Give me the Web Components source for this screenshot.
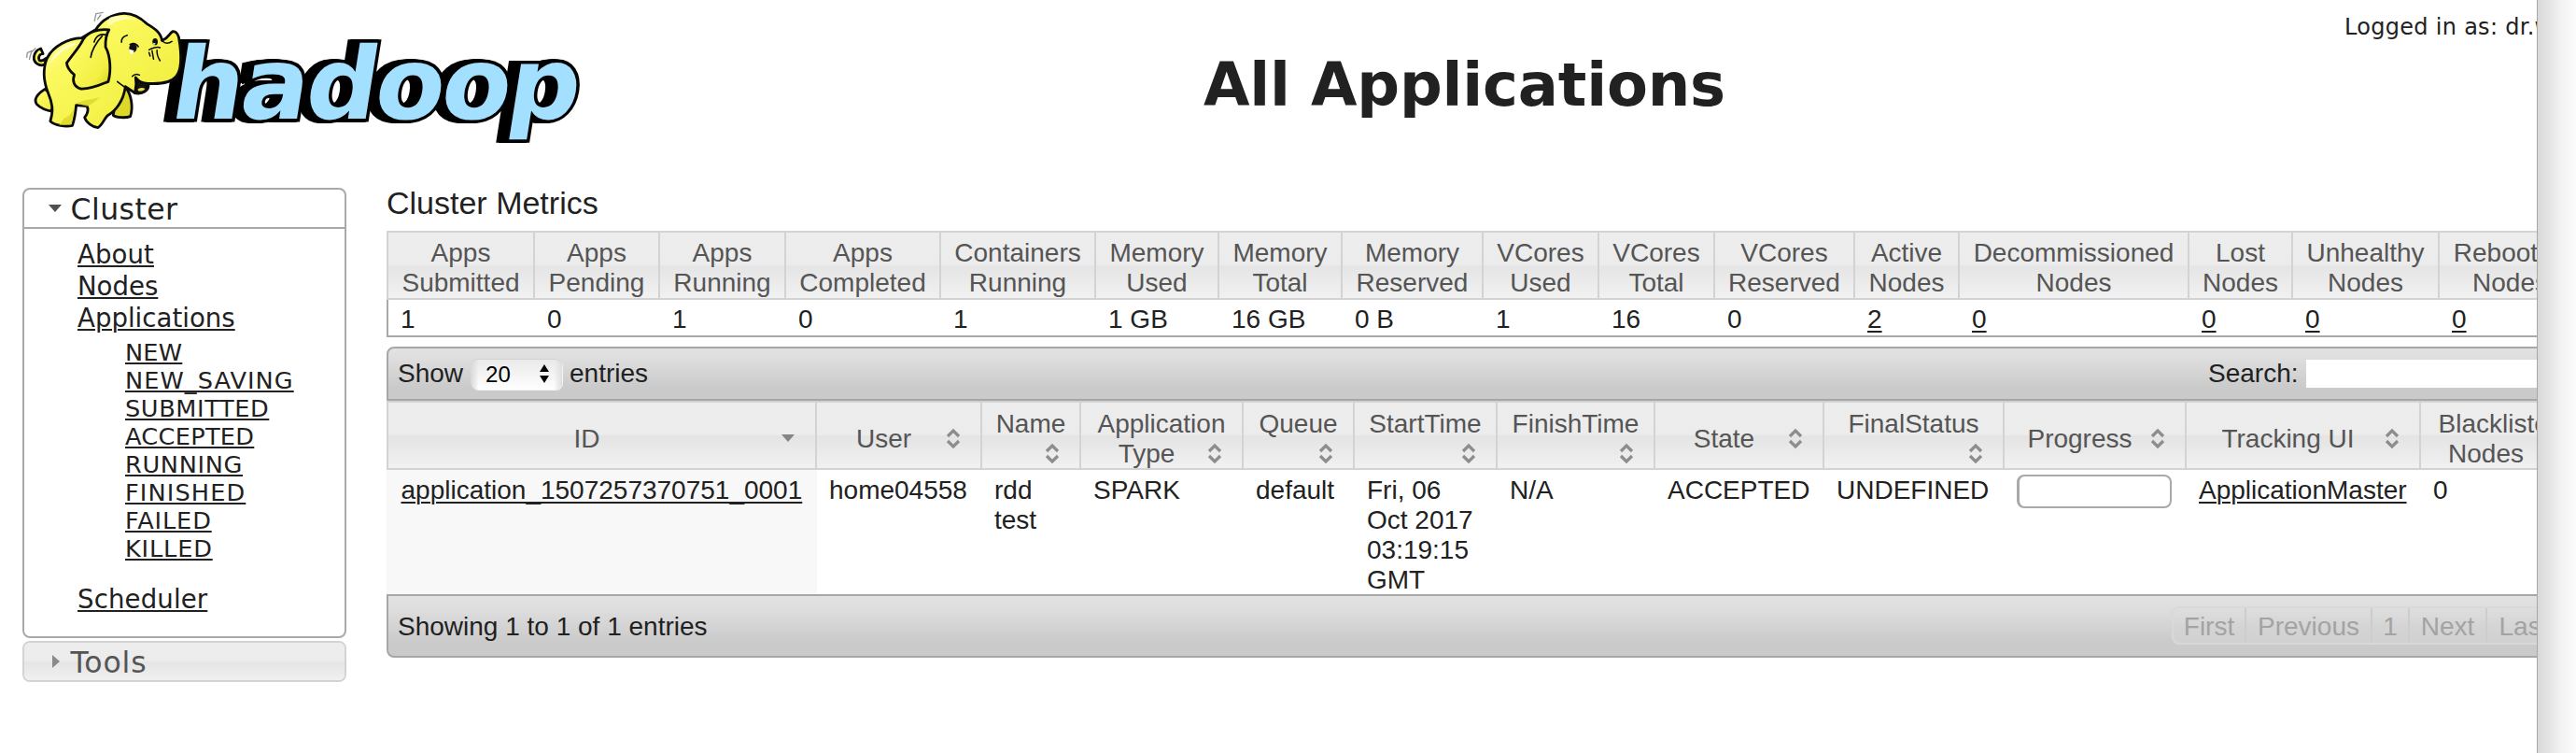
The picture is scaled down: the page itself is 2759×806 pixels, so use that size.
<!DOCTYPE html>
<html lang="en">
<head>
<meta charset="utf-8">
<title>All Applications</title>
<style>
html,body{margin:0;height:100%;background:#fff;overflow:hidden}
body{color:#212121;font:28px/32px "Liberation Sans",Arial,sans-serif}
</style>
</head>
<body>
<yarn-app></yarn-app>
<script>
const define = (name, html, setup) => customElements.define(name, class extends HTMLElement {
  connectedCallback() {
    if (this.shadowRoot) return;
    const root = this.attachShadow({mode: 'open'});
    root.innerHTML = typeof html === 'function' ? html(this) : html;
    if (setup) setup(this, root);
  }
});

/* Text tracked out or in to a given advance width. */
define('tracked-text', `<style>:host{display:inline-block;white-space:nowrap;text-decoration:inherit}</style><slot></slot>`, host => {
  const natural = host.getBoundingClientRect().width;
  host.style.letterSpacing = ((+host.getAttribute('width') - natural) / host.textContent.length).toFixed(3) + 'px';
});

define('hadoop-logo', `
<style>:host{display:block;width:640px;height:170px}svg{display:block;overflow:visible}
.e *{vector-effect:non-scaling-stroke;stroke-linejoin:round;stroke-linecap:round}
text{font:bold 107px "DejaVu Sans",sans-serif;letter-spacing:-3px;fill:#a3dfff;stroke:#000;stroke-width:7px;paint-order:stroke;stroke-linejoin:miter}
.w{filter:drop-shadow(-3px 0 0 #000) drop-shadow(-3px 0 0 #000) drop-shadow(-4px 0 0 #000)}</style>
<svg width="640" height="170" viewBox="0 0 640 170">
<defs><linearGradient id="y" x1="0" y1="0" x2="1" y2="1"><stop offset="0" stop-color="#ffffb0"/><stop offset=".3" stop-color="#fbf95e"/><stop offset=".75" stop-color="#f2f044"/><stop offset="1" stop-color="#d2ce20"/></linearGradient></defs>
<g class="w"><g transform="translate(180 127) skewX(-9)"><text textLength="434" lengthAdjust="spacingAndGlyphs">hadoop</text></g></g>
<g class="e" transform="scale(.40816 .33333)" stroke="#0b0b0b" stroke-width="2.8" fill="url(#y)">
<path d="M118 206C104 216 88 202 89 183C90 168 99 158 107 156L113 173C104 172 99 184 103 193C108 198 114 194 121 187Z"/>
<path d="M118 286C100 300 88 318 96 334C106 348 124 356 136 357L142 310Z"/>
<path d="M330 280C345 305 350 345 342 374C328 380 304 377 297 370L308 300Z" fill="#dcd82a"/>
<path d="M214 122C178 124 140 148 124 186C111 222 115 264 127 301C137 330 141 354 132 389C144 403 172 408 190 403C197 377 199 352 200 338L228 341C234 352 228 369 222 377C226 394 244 409 257 410C269 401 272 384 282 371C302 358 324 326 329 278C340 287 350 295 354 299C374 304 393 290 389 268C418 270 448 267 462 246C480 219 474 154 469 119C465 105 459 100 453 101C443 108 443 122 425 130C422 104 404 90 385 76C367 55 348 42 325 43C290 46 266 67 252 94Z"/>
<path d="M286 96C260 91 230 103 218 127C208 153 192 172 175 202C176 219 187 232 195 240C189 260 194 278 211 285C239 287 264 272 284 262C292 229 290 179 277 151C276 125 279 110 286 96Z"/>
<path d="M247 135C252 115 263 106 281 113M268 116C252 136 240 164 238 184" fill="none" stroke-width="1.6"/>
<path d="M356 249C359 269 357 281 355 292C371 297 387 285 388 268C371 267 362 259 356 249Z" fill="#141414"/>
<path d="M362 286C369 281 375 281 381 285C376 293 367 294 362 291Z" fill="#e8e33a" stroke="none"/>
<path d="M319 136C318 124 325 116 334 113M341 143C350 137 358 141 363 150M308 262C324 279 340 289 354 299M347 245C353 237 360 237 366 241M391 160C406 151 414 150 420 153M399 163L403 190M412 161C411 174 415 186 420 195M391 169L394 180M426 132C433 140 441 141 451 133" fill="none" stroke-width="1.5"/>
<ellipse cx="349" cy="154" rx="10" ry="14" fill="#111" stroke="none"/><path d="M340 158L352 163L347 174L341 170Z" fill="#fff" stroke="none"/>
<ellipse cx="407" cy="134" rx="7" ry="11" fill="#111" stroke="none"/><path d="M402 137L409 140L403 145Z" fill="#fff" stroke="none"/>
<path d="M287 57C310 45 342 52 361 66C338 59 306 60 280 88Z" fill="#ffffd2" opacity=".75" stroke="none"/>
<path d="M185 139C160 151 139 176 130 207C149 178 166 156 205 141Z" fill="#ffffdb" opacity=".8" stroke="none"/>
<path d="M200 332C220 319 244 320 263 312C248 327 241 335 228 341ZM169 379C184 373 190 360 194 344L188 400L155 402Z" fill="#d8d426" opacity=".75" stroke="none"/>
<path d="M248 67L252 44L270 40M256 62L264 48M70 184L72 169L84 163M77 190L82 168L93 155" fill="none" stroke="#999" stroke-width="1.4"/>
</g></svg>`);

define('nav-section', host => `
<style>
:host{display:block;box-sizing:border-box;width:347px;border:2px solid #a9a9a9;border-radius:8px;overflow:hidden;font-family:"DejaVu Sans",Verdana,sans-serif}
h3{box-sizing:border-box;height:40px;margin:0;padding:0 0 0 25px;display:flex;align-items:center;font-weight:400;font-size:31.5px;line-height:40px}
svg{width:16px;height:16px;margin-right:8.5px;flex:none}
tracked-text{padding-top:1px}
.body{border-top:2px solid #a9a9a9}
:host(:not([open])){border-color:#d3d3d3;color:#555}
:host(:not([open])) h3{line-height:40px;background:linear-gradient(#ededed 0,#ececec 48%,#e5e5e5 52%,#f0f0f0)}
:host(:not([open])) .body{display:none}
</style>
<h3><svg viewBox="0 0 16 16">${host.hasAttribute('open') ? '<path d="M1 4H15L8 12Z" fill="#505050"/>' : '<path d="M5 1L13 8L5 15Z" fill="#8a8a8a"/>'}</svg><tracked-text width="${host.getAttribute('label-width')}">${host.getAttribute('label')}</tracked-text></h3>
<div class="body"><slot></slot></div>`);

const link = ([t, w]) => `<li><a href="#"><tracked-text width="${w}">${t}</tracked-text></a></li>`;
define('side-nav', `
<style>
:host{display:flex;flex-direction:column;gap:3px;width:347px}
ul{list-style:none;margin:0;padding:0}
a{color:inherit;text-decoration:underline;text-decoration-thickness:2px;text-underline-offset:2px}
.top{padding:11px 0 0 57px;font-size:27.6px;line-height:34px;height:425px}
.top li{height:34px}
.sub{margin:4px 0 23px 51px;font-size:25.6px;line-height:30px}
.sub li{height:30px}
</style>
<nav-section open label="Cluster" label-width="115">
<ul class="top">${[['About',82],['Nodes',86.3],['Applications',168.7]].map(link).join('')}
<ul class="sub">${[['NEW',61.3],['NEW_SAVING',180.7],['SUBMITTED',154.3],['ACCEPTED',138.3],['RUNNING',126],['FINISHED',129.3],['FAILED',92.7],['KILLED',93.7]].map(link).join('')}</ul>
${link(['Scheduler',139.3])}</ul>
</nav-section>
<nav-section label="Tools" label-width="82"></nav-section>`);

define('metrics-table', () => {
  const heads = ['Apps Submitted','Apps Pending','Apps Running','Apps Completed','Containers Running','Memory Used','Memory Total','Memory Reserved','VCores Used','VCores Total','VCores Reserved','Active Nodes','Decommissioned Nodes','Lost Nodes','Unhealthy Nodes','Rebooted Nodes'];
  const vals = ['1','0','1','0','1','1 GB','16 GB','0 B','1','16','0'];
  const links = ['2','0','0','0','0'];
  return `<style>
:host{display:grid;width:2352px;box-sizing:border-box;border-left:2px solid #a9a9a9;border-bottom:2px solid #a9a9a9;
grid-template-columns:157px 134px 135px 166px 166px 132px 132px 151px 124px 124px 150px 112px 246px 111px 157px 153px;grid-template-rows:74px 38px}
.h{box-sizing:border-box;border:solid #d3d3d3;border-width:2px 2px 2px 0;padding-top:6px;text-align:center;color:#555;background:linear-gradient(#ededed 0,#ececec 48%,#e5e5e5 52%,#f1f1f1)}
.h:nth-of-type(1){box-shadow:-2px 0 #d3d3d3}
.v{padding:5px 0 0 13px}
a{color:inherit;text-decoration:underline;text-decoration-thickness:2px;text-underline-offset:3px}
</style>${heads.map(h => `<div class="h">${h.replace(' ', '<br>')}</div>`).join('')}${vals.map(v => `<div class="v">${v}</div>`).join('')}${links.map(v => `<div class="v"><a href="#">${v}</a></div>`).join('')}`;
});

define('tool-bar', `
<style>
:host{display:flex;box-sizing:border-box;width:2352px;border:2px solid #a7a7a7;padding-left:10px;background:linear-gradient(#e2e2e2 0,#dedede 20%,#cbcbcb 75%,#cacaca)}
:host([top]){height:58px;border-radius:8px 8px 0 0}
:host([bottom]){height:68px;border-radius:0 0 8px 8px}
</style><slot></slot>`);

define('length-select', `
<style>
:host{display:flex;align-items:center;justify-content:space-between;box-sizing:border-box;width:98px;height:33px;padding:0 13px 0 16px;border-radius:8px;font-size:24px;line-height:33px;color:#000;
background:linear-gradient(90deg,#d8d8d8 0,#fff0 9%,#fff0 91%,#dedede),linear-gradient(#e9e9e9,#fff);box-shadow:inset 0 1px #d2d2d2,1px 1px #f4f4f4}
svg{width:12px;height:22px;margin-top:-2px}
</style><slot></slot><svg viewBox="0 0 12 22"><path d="M1 9L6 1L11 9ZM1 13L6 21L11 13Z"/></svg>`);

define('sort-icon', host => `
<style>:host{display:block;float:right;width:32px;height:32px}svg{display:block;width:32px;height:32px}</style>
<svg viewBox="0 0 32 32" fill="none" stroke="#8d8d8d" stroke-width="3.2">${host.hasAttribute('down') ? '<path d="M9 11H23L16 19Z" fill="#858585" stroke="none"/>' : '<path d="M10 13L16 7L22 13M10 18L16 24L22 18"/>'}</svg>`);

define('progress-bar', `<style>:host{display:block;box-sizing:border-box;width:166px;height:36px;border:2px solid #a9a9a9;border-left-width:3px;border-radius:8px;background:#fff}</style>`);

define('apps-table', () => {
  const s = '<sort-icon></sort-icon>';
  const heads = ['<sort-icon down></sort-icon>ID', s + 'User', 'Name<br>' + s + '&nbsp;', `Application<br>${s}Type`, 'Queue<br>' + s + '&nbsp;', 'StartTime<br>' + s + '&nbsp;', 'FinishTime<br>' + s + '&nbsp;', s + 'State', 'FinalStatus<br>' + s + '&nbsp;', s + 'Progress', s + 'Tracking UI', `Blacklisted<br>${s}Nodes`];
  const cells = ['<a href="#">application_1507257370751_0001</a>', 'home04558', 'rdd<br>test', 'SPARK', 'default', 'Fri, 06<br>Oct 2017<br>03:19:15<br>GMT', 'N/A', 'ACCEPTED', 'UNDEFINED', '<progress-bar></progress-bar>', '<a href="#">ApplicationMaster</a>', '0'];
  return `<style>
:host{display:grid;width:2352px;white-space:nowrap;grid-template-columns:461px 177px 106px 174px 119px 153px 169px 181px 193px 195px 251px 173px;grid-template-rows:74px 133px}
.h{box-sizing:border-box;border:solid #d3d3d3;border-width:2px 2px 2px 0;padding:7px 13px 0;display:flex;flex-direction:column;justify-content:center;color:#555;background:linear-gradient(#ededed 0,#ececec 48%,#e4e4e4 52%,#f1f1f1)}
.h>div{text-align:center}
.h.first{border-left-width:2px}
.v{padding:6px 0 0 13px}
.v.progress{padding:5px 0 0 12.5px}
.v.first{padding-left:15.5px;background:#f8f8f8;width:445.5px}
a{color:inherit;text-decoration:underline;text-decoration-thickness:2px;text-underline-offset:3px}
</style>${heads.map((h, i) => `<div class="h ${i ? '' : 'first'}"><div>${h}</div></div>`).join('')}${cells.map((c, i) => `<div class="v ${i ? i === 9 ? 'progress' : '' : 'first'}">${c}</div>`).join('')}`;
});

define('page-buttons', `
<style>
:host{display:flex;height:41px;margin:11px 0 0;box-sizing:border-box;border:2px solid #d9d9d9;border-radius:8px;background:linear-gradient(#dedede,#d4d4d4 55%,#d1d1d1);color:#a3a3a3;line-height:39px}
span{box-sizing:border-box;text-align:center;border-right:2px solid #cdcdcd;flex:none;height:37px}
</style><span style="width:78px">First</span><span style="width:135px">Previous</span><span style="width:40px">1</span><span style="width:83px">Next</span><span style="width:78px;border:0">Last</span>`);

define('yarn-app', `
<style>
:host{display:flex;width:2759px;height:806px;overflow:hidden}
main{width:2717px;height:806px;overflow:hidden;flex:none;background:#fff}
.edge{flex:1;border-left:1px solid #a8a8a8;background:linear-gradient(90deg,#d8d8d8,#e4e4e4 28%,#f2f2f2 60%,#fbfbfb)}
header{display:grid;grid-template-columns:640px 1871px 300px;height:201px;font-family:"DejaVu Sans",Verdana,sans-serif;white-space:nowrap}
h1{margin:51px 0 0 649px;font-size:64px;line-height:80px}
.user{font-size:24px;line-height:28px;padding-top:15px}
.cols{display:flex;padding-left:24px;gap:43px}
.content{width:2352px;flex:none}
h2{margin:-1px 0 0;height:47px;font-weight:400;font-size:34px;line-height:34px}
tool-bar[top]{margin-top:10px}
.show{margin:11px 8px 0 0}
length-select{margin-top:11px}
.entries{margin:11px 0 0 8px;flex:1}
.search{margin:11px 8px 0 -1px}
.box{width:288px;height:30px;margin:12px 6px 0 0;background:#fff}
.info{margin-top:17px;flex:1}
.top-right{display:flex;width:398px}
page-buttons{width:418px}
.pages{width:438px}
</style>
<main>
<header><hadoop-logo></hadoop-logo><h1><tracked-text width="559">All Applications</tracked-text></h1><div class="user"><tracked-text width="254">Logged in as: dr.who</tracked-text></div></header>
<div class="cols"><side-nav></side-nav>
<div class="content"><h2>Cluster Metrics</h2><metrics-table></metrics-table>
<tool-bar top><div class="show">Show</div><length-select>20</length-select><div class="entries">entries</div><div class="top-right"><div class="search">Search:</div><div class="box"></div></div></tool-bar>
<apps-table></apps-table>
<tool-bar bottom><div class="info">Showing 1 to 1 of 1 entries</div><div class="pages"><page-buttons></page-buttons></div></tool-bar>
</div></div>
</main><div class="edge"></div>`);
</script>
</body>
</html>
